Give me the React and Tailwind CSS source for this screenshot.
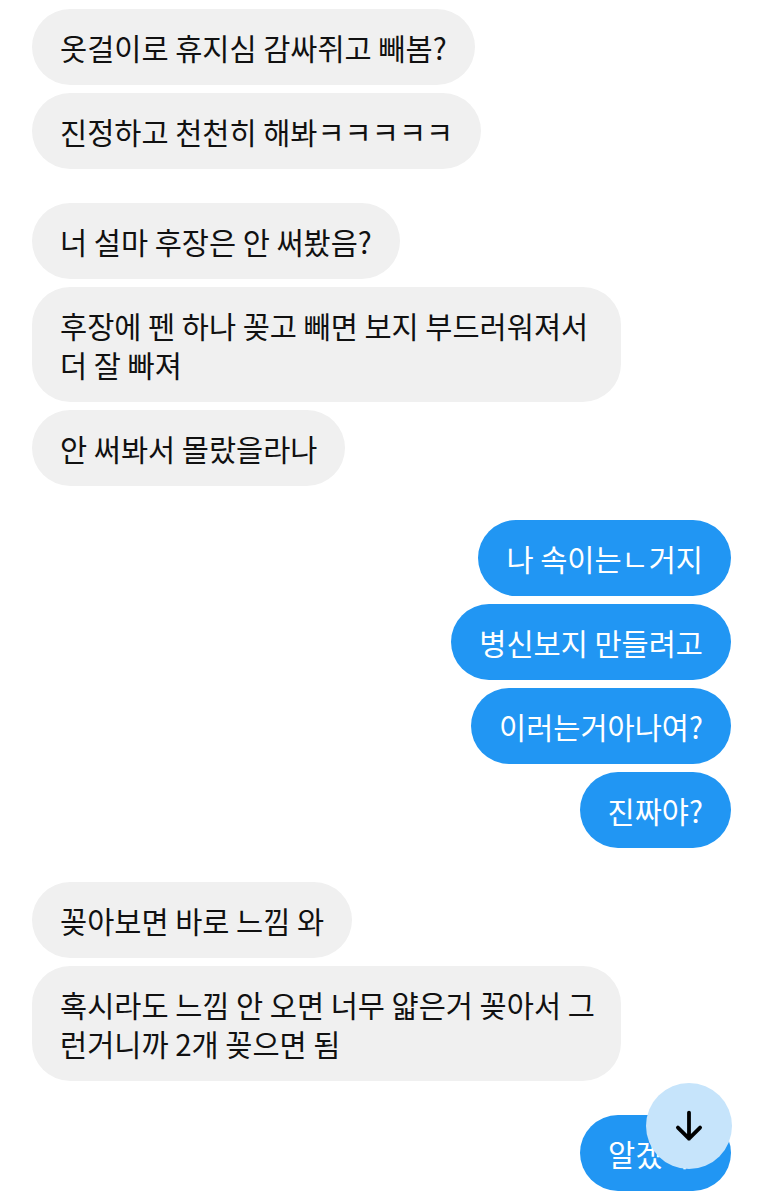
import React from 'react';

const groups = [
  { me: false, items: ['옷걸이로 휴지심 감싸쥐고 빼봄?', '진정하고 천천히 해봐ㅋㅋㅋㅋㅋ'] },
  {
    me: false,
    items: [
      '너 설마 후장은 안 써봤음?',
      ['후장에 펜 하나 꽂고 빼면 보지 부드러워져서', '더 잘 빠져'],
      '안 써봐서 몰랐을라나',
    ],
  },
  { me: true, items: ['나 속이는ㄴ거지', '병신보지 만들려고', '이러는거아나여?', '진짜야?'] },
  {
    me: false,
    items: ['꽂아보면 바로 느낌 와', ['혹시라도 느낌 안 오면 너무 얇은거 꽂아서 그', '런거니까 2개 꽂으면 됨']],
  },
  { me: true, items: ['알겠어'] },
];

const Bubble = ({ me, text, className = '' }) => {
  const multi = Array.isArray(text);
  return (
    <div
      className={`px-7 py-[18.5px] text-[29.5px] leading-[39px] whitespace-nowrap ${
        multi ? 'w-[589px] rounded-[38px]' : 'rounded-full'
      } ${me ? 'bg-[#2196f3] text-white' : 'bg-[#f0f0f0] text-[#111]'} ${className}`}
    >
      {multi ? text.map((line, i) => <div key={i}>{line}</div>) : text}
    </div>
  );
};

export default function App() {
  return (
    <div
      className="relative w-[763px] h-[1199px] overflow-hidden bg-white px-8 pt-[9px] flex flex-col gap-[34px]"
      style={{ fontFamily: '"Noto Sans CJK KR", "Noto Sans", sans-serif' }}
    >
      {groups.map((g, i) => (
        <div key={i} className={`flex flex-col gap-2 ${g.me ? 'items-end' : 'items-start'}`}>
          {g.items.map((t, j) => (
            <Bubble key={j} me={g.me} text={t} className={i === groups.length - 1 ? 'w-[151px]' : ''} />
          ))}
        </div>
      ))}

      {/* scroll to bottom button */}
      <button className="absolute left-[646px] top-[1083px] w-[86px] h-[86px] rounded-full bg-[#c6e4fb] flex items-center justify-center">
        <svg width="38" height="38" viewBox="0 0 24 24" fill="none" stroke="#000" strokeWidth="2.4" strokeLinecap="round" strokeLinejoin="round">
          <path d="M12 3.5v16.5M5 13l7 7 7-7" />
        </svg>
      </button>
    </div>
  );
}
